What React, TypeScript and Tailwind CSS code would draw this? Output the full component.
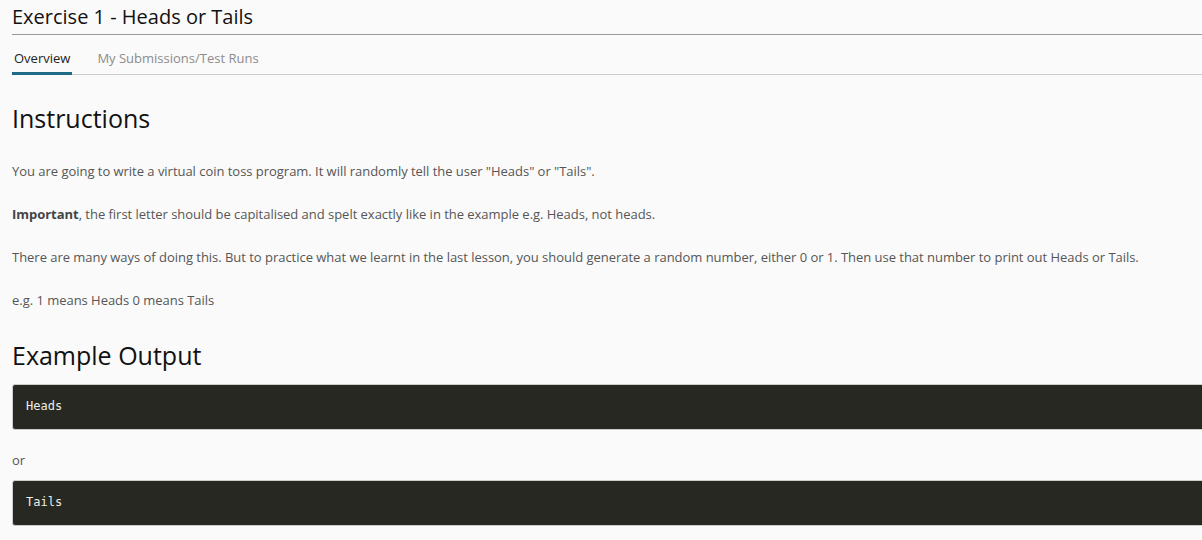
import React from "react";

export default function App() {
  return (
    <div className="min-h-[540px] w-full overflow-hidden bg-[#fafafa] pl-3 font-['Open_Sans',sans-serif] text-[#565656]">
      <div className="-mr-6">
        <h1 className="border-b border-[#9a9a9a] pt-[5px] pb-[5px] text-[20px] leading-[24px] text-[#111]">
          Exercise 1 - Heads or Tails
        </h1>
        <div className="mt-[14px] flex gap-[25px] border-b border-[#cccccc] text-[13px]">
          <div className="-mb-[1px] border-b-[3px] border-[#1d6b86] px-[2px] pb-[4px] leading-[19px] text-[#222]">Overview</div>
          <div className="pb-[4px] leading-[19px] text-[#8c8c8c]">My Submissions/Test Runs</div>
        </div>

        <h2 className="mt-[27px] text-[25px] leading-[32px] text-[#111]">Instructions</h2>
        <div className="mt-[28px] flex flex-col gap-[24px] text-[13px] leading-[19px] tracking-[-0.03px]">
          <p>You are going to write a virtual coin toss program. It will randomly tell the user "Heads" or "Tails".</p>
          <p>
            <b className="font-bold text-[#444]">Important</b>, the first letter should be capitalised and spelt exactly like in the example e.g. Heads, not heads.
          </p>
          <p>
            There are many ways of doing this. But to practice what we learnt in the last lesson, you should generate a random number, either 0 or 1. Then use that number to print out Heads or Tails.
          </p>
          <p>e.g. 1 means Heads 0 means Tails</p>
        </div>

        <h2 className="mt-[29px] text-[25px] leading-[32px] text-[#111]">Example Output</h2>
        <pre className="mt-[13px] rounded-[3px] border border-[#cccccc] bg-[#272822] px-[13px] py-[12px] pb-[14px] font-['DejaVu_Sans_Mono',monospace] text-[12px] leading-[18px] text-[#ecece6]">
          Heads
        </pre>
        <p className="mt-[21px] text-[13px] leading-[19px]">or</p>
        <pre className="mt-[10px] rounded-[3px] border border-[#cccccc] bg-[#272822] px-[13px] py-[12px] pb-[14px] font-['DejaVu_Sans_Mono',monospace] text-[12px] leading-[18px] text-[#ecece6]">
          Tails
        </pre>
      </div>
    </div>
  );
}
